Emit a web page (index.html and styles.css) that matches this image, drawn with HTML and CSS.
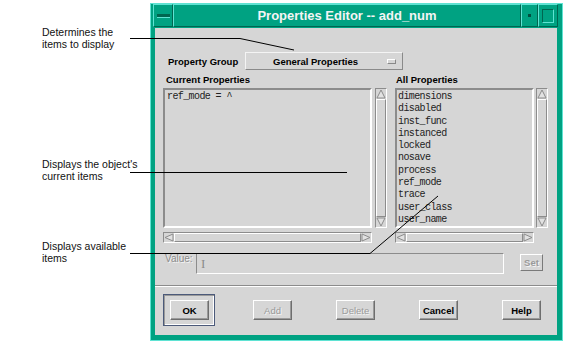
FILE: index.html
```html
<!DOCTYPE html>
<html>
<head>
<meta charset="utf-8">
<link rel="stylesheet" href="styles.css">
</head>
<body>

<div class="page">
  <div class="notes">
    <p class="note note-group">Determines the<br>items to display</p>
    <p class="note note-current">Displays the object's<br>current items</p>
    <p class="note note-all">Displays available<br>items</p>
  </div>

  <div class="window">
    <div class="titlebar">
      <div class="tb-btn tb-menu"><span></span></div>
      <div class="tb-title">Properties Editor -- add_num</div>
      <div class="tb-btn tb-min"><span></span></div>
      <div class="tb-btn tb-max"><span></span></div>
    </div>

    <div class="content">
      <div class="group-row">
        <div class="group-label">Property Group</div>
        <div class="option">General Properties<span class="option-mark"></span></div>
      </div>

      <div class="lists">
        <div class="pane pane-current">
          <div class="pane-label">Current Properties</div>
          <div class="list-row">
            <div class="list">ref_mode = ^</div>
            <div class="vscroll">
              <svg class="arrow" width="10" height="10"><polygon points="5,1 1,9 9,9"/></svg>
              <div class="thumb"></div>
              <svg class="arrow" width="10" height="10"><polygon points="1,1 9,1 5,9"/></svg>
            </div>
          </div>
          <div class="hscroll">
            <svg class="arrow" width="10" height="9"><polygon points="1,4.5 9,1 9,8"/></svg>
            <div class="thumb"></div>
            <svg class="arrow" width="10" height="9"><polygon points="9,4.5 1,1 1,8"/></svg>
          </div>
        </div>

        <div class="pane pane-all">
          <div class="pane-label">All Properties</div>
          <div class="list-row">
            <div class="list">dimensions<br>disabled<br>inst_func<br>instanced<br>locked<br>nosave<br>process<br>ref_mode<br>trace<br>user_class<br>user_name</div>
            <div class="vscroll">
              <svg class="arrow" width="10" height="10"><polygon points="5,1 1,9 9,9"/></svg>
              <div class="thumb"></div>
              <svg class="arrow" width="10" height="10"><polygon points="1,1 9,1 5,9"/></svg>
            </div>
          </div>
          <div class="hscroll">
            <svg class="arrow" width="10" height="9"><polygon points="1,4.5 9,1 9,8"/></svg>
            <div class="thumb"></div>
            <svg class="arrow" width="10" height="9"><polygon points="9,4.5 1,1 1,8"/></svg>
          </div>
        </div>
      </div>

      <div class="value-row">
        <div class="value-label">Value:</div>
        <div class="value-field"><span class="cursor">I</span></div>
        <div class="set-btn">Set</div>
      </div>

      <div class="separator"></div>

      <div class="buttons">
        <div class="btn btn-default">OK</div>
        <div class="btn btn-off">Add</div>
        <div class="btn btn-off">Delete</div>
        <div class="btn">Cancel</div>
        <div class="btn">Help</div>
      </div>
    </div>
  </div>

  <svg class="callouts" width="565" height="343">
    <polyline points="130,38.5 240,38.5 294,50"/>
    <polyline points="130,172.5 347,172.5"/>
    <polyline points="130,253.5 370,253.5 438,196"/>
  </svg>
</div>

</body>
</html>
```

FILE: styles.css
```css
* {
  box-sizing: border-box;
}

body {
  margin: 0;
  background: #fff;
  font-family: "Liberation Sans", Arial, sans-serif;
}

.page {
  position: relative;
  display: flex;
  width: 565px;
  height: 343px;
}

/* annotation texts on the left */
.notes {
  width: 150px;
  padding-left: 42px;
}

.note {
  margin: 0;
  font-size: 10.5px;
  line-height: 12px;
  color: #111;
}

.note-group {
  margin-top: 26px;
}

.note-current {
  margin-top: 108px;
}

.note-all {
  margin-top: 58px;
}

.callouts {
  position: absolute;
  left: 0;
  top: 0;
  pointer-events: none;
}

.callouts polyline {
  fill: none;
  stroke: #000;
  stroke-width: 1;
}

/* window frame */
.window {
  margin-top: 3px;
  width: 413px;
  height: 338px;
  border: 1px solid #5fe3d3;
  background: #00a282;
  padding: 0 5px 5px 4px;
  display: flex;
  flex-direction: column;
}

.titlebar {
  display: flex;
  height: 23px;
  margin: 0 -1px 1px -2px;
}

.tb-btn,
.tb-title {
  border: 1px solid;
  border-color: #5fe3d3 #006650 #006650 #5fe3d3;
}

.tb-btn {
  display: flex;
  align-items: center;
  justify-content: center;
}

.tb-menu {
  width: 20px;
}

.tb-menu span {
  width: 13px;
  height: 4px;
  background: #006650;
  border-bottom: 1px solid #5fe3d3;
}

.tb-title {
  flex: 1;
  color: #f4f4f4;
  font-size: 13px;
  font-weight: bold;
  line-height: 21px;
  text-align: center;
}

.tb-min {
  width: 17px;
}

.tb-min span {
  width: 3px;
  height: 3px;
  background: #004f40;
}

.tb-max {
  width: 20px;
}

.tb-max span {
  width: 12px;
  height: 14px;
  border: 1px solid;
  border-color: #006650 #5fe3d3 #5fe3d3 #006650;
}

/* dialog body */
.content {
  height: 307px;
  background: #d6d6d6;
  padding-top: 24px;
  font-size: 9.5px;
  color: #000;
}

.group-row {
  display: flex;
  align-items: center;
  height: 18px;
  padding-left: 13px;
}

.group-label {
  width: 77px;
  font-weight: bold;
}

.option {
  width: 158px;
  height: 18px;
  display: flex;
  align-items: center;
  padding-left: 27px;
  border: 1px solid;
  border-color: #f4f4f4 #8a8a8a #8a8a8a #f4f4f4;
  font-weight: bold;
}

.option-mark {
  margin-left: auto;
  margin-right: 6px;
  width: 9px;
  height: 5px;
  border: 1px solid;
  border-color: #fff #888 #888 #fff;
}

.lists {
  display: flex;
  gap: 8px;
  margin-top: 4px;
  padding-left: 8px;
}

.pane-label {
  font-weight: bold;
  line-height: 12px;
  padding-left: 3px;
}

.pane-all .pane-label {
  padding-left: 1px;
}

.list-row {
  display: flex;
  height: 140px;
  margin-top: 2px;
}

.list {
  border: 2px solid;
  border-color: #8c8c8c #fff #fff #8c8c8c;
  padding: 1px 2px 0;
  font-family: "Liberation Mono", "Courier New", monospace;
  font-size: 10px;
  letter-spacing: -0.6px;
  line-height: 12.3px;
  color: #222;
}

.pane-current .list {
  width: 209px;
}

.pane-all .list {
  width: 139px;
  padding-left: 1px;
}

.vscroll {
  width: 12px;
  margin-left: 3px;
  display: flex;
  flex-direction: column;
  border: 1px solid;
  border-color: #8c8c8c #fff #fff #8c8c8c;
}

.pane-all .vscroll {
  margin-left: 2px;
}

.hscroll {
  height: 11px;
  margin-top: 4px;
  display: flex;
  border: 1px solid;
  border-color: #8c8c8c #fff #fff #8c8c8c;
}

.pane-current .hscroll {
  width: 209px;
}

.pane-all .hscroll {
  width: 139px;
}

.thumb {
  flex: 1;
  border: 1px solid;
  border-color: #fff #8c8c8c #8c8c8c #fff;
}

.arrow {
  flex: none;
}

.arrow polygon {
  fill: #e2e2e2;
  stroke: #8c8c8c;
  stroke-width: 1;
}

.value-row {
  display: flex;
  height: 21px;
  margin-top: 10px;
  padding-left: 10px;
}

.value-label {
  width: 31px;
  font-size: 10px;
  line-height: 12px;
  color: #8c8c8c;
  text-shadow: 1px 1px 0 #f4f4f4;
}

.value-field {
  width: 308px;
  border: 1px solid;
  border-color: #8c8c8c #fff #fff #8c8c8c;
  padding: 2px 0 0 4px;
}

.cursor {
  font-family: "Liberation Serif", serif;
  font-size: 13px;
  line-height: 15px;
  color: #8c8c8c;
}

.set-btn {
  width: 23px;
  height: 17px;
  margin: 1px 0 0 16px;
  display: flex;
  align-items: center;
  justify-content: center;
  border: 1px solid;
  border-color: #fff #7a7a7a #7a7a7a #fff;
  font-weight: bold;
  color: #9a9a9a;
  text-shadow: 1px 1px 0 #f4f4f4;
}

.separator {
  height: 2px;
  margin-top: 11px;
  border-top: 1px solid #8c8c8c;
  border-bottom: 1px solid #fff;
}

.buttons {
  display: flex;
  gap: 44px;
  margin-top: 13px;
  padding-left: 15px;
}

.btn {
  width: 39px;
  height: 20px;
  display: flex;
  align-items: center;
  justify-content: center;
  border: 1px solid;
  border-color: #fff #6e6e6e #6e6e6e #fff;
  box-shadow: inset -1px -1px 0 #9a9a9a;
  font-weight: bold;
}

.btn-off {
  color: #9a9a9a;
  font-weight: normal;
  text-shadow: 1px 1px 0 #f4f4f4;
}

.btn-default {
  position: relative;
}

.btn-default::before {
  content: "";
  position: absolute;
  left: -8px;
  top: -7px;
  right: -7px;
  bottom: -7px;
  border: 1px solid #4c5a7a;
  box-shadow: inset 1px 1px 0 #9a9a9a, inset -1px -1px 0 #fff;
}
```
